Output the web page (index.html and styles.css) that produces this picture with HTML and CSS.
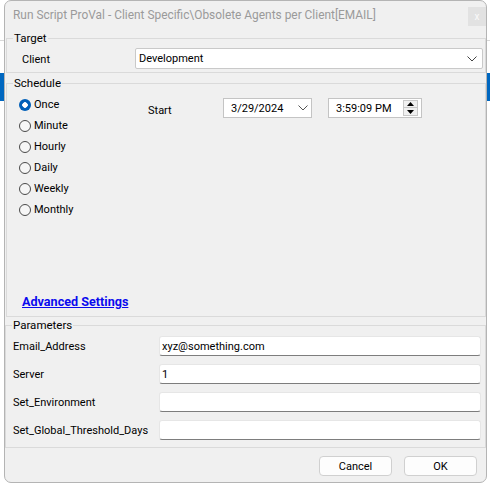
FILE: index.html
```html
<!DOCTYPE html>
<html>
<head>
<meta charset="utf-8">
<link rel="stylesheet" href="styles.css">
</head>
<body>
<div class="desktop">
  <div class="side side-left"><div class="bg-line"></div><div class="bg-blue"></div></div>
  <div class="window">
    <div class="titlebar">
      <span class="title">Run Script ProVal - Client Specific\Obsolete Agents per Client[EMAIL]</span>
      <div class="close">x</div>
    </div>

    <fieldset class="group target">
      <legend>Target</legend>
      <div class="client-row">
        <span class="lbl">Client</span>
        <div class="combo">
          <span>Development</span>
          <svg class="chev" width="10" height="6" viewBox="0 0 10 6"><path d="M0.5 0.5 L5 5 L9.5 0.5" fill="none" stroke="#444" stroke-width="1"/></svg>
        </div>
      </div>
    </fieldset>

    <fieldset class="group schedule">
      <legend>Schedule</legend>
      <div class="sched-inner">
        <div class="sched-body">
          <div class="radios">
            <div class="radio-row"><span class="radio checked"></span><span>Once</span></div>
            <div class="radio-row"><span class="radio"></span><span>Minute</span></div>
            <div class="radio-row"><span class="radio"></span><span>Hourly</span></div>
            <div class="radio-row"><span class="radio"></span><span>Daily</span></div>
            <div class="radio-row"><span class="radio"></span><span>Weekly</span></div>
            <div class="radio-row"><span class="radio"></span><span>Monthly</span></div>
          </div>
          <div class="start">
            <span class="start-lbl">Start</span>
            <div class="date">
              <span>3/29/2024</span>
              <svg class="chev" width="10" height="6" viewBox="0 0 10 6"><path d="M0.5 0.5 L5 5 L9.5 0.5" fill="none" stroke="#555" stroke-width="1"/></svg>
            </div>
            <div class="time">
              <span>3:59:09 PM</span>
              <div class="spin">
                <div class="spin-btn"><svg width="7" height="4" viewBox="0 0 7 4"><path d="M3.5 0 L7 4 L0 4 Z" fill="#000"/></svg></div>
                <div class="spin-btn"><svg width="7" height="4" viewBox="0 0 7 4"><path d="M0 0 L7 0 L3.5 4 Z" fill="#000"/></svg></div>
              </div>
            </div>
          </div>
        </div>
        <a class="adv" href="#">Advanced Settings</a>
      </div>
    </fieldset>

    <fieldset class="group params">
      <legend>Parameters</legend>
      <div class="param-grid">
        <span class="plbl">Email_Address</span><div class="tbox">xyz@something.com</div>
        <span class="plbl">Server</span><div class="tbox">1</div>
        <span class="plbl">Set_Environment</span><div class="tbox"></div>
        <span class="plbl">Set_Global_Threshold_Days</span><div class="tbox"></div>
      </div>
    </fieldset>

    <div class="buttons">
      <div class="btn">Cancel</div>
      <div class="btn">OK</div>
    </div>
  </div>
  <div class="side side-right"><div class="bg-line"></div><div class="bg-blue"></div></div>
</div>
</body>
</html>
```
FILE: styles.css
```css
* { box-sizing: border-box; }
html, body { margin: 0; padding: 0; }
body {
  width: 490px;
  height: 484px;
  background: #ffffff;
  font-family: Roboto, "Liberation Sans", sans-serif;
  font-size: 11px;
  color: #000;
  overflow: hidden;
}
.desktop {
  display: flex;
  height: 484px;
}
.side {
  width: 4px;
  flex: none;
  display: flex;
  flex-direction: column;
}
.side-right { width: 3px; }
.bg-line {
  margin-top: 40px;
  height: 1px;
  background: #d8d8d8;
}
.bg-blue {
  margin-top: 32px;
  height: 28px;
  background: #0067c0;
}
.window {
  width: 483px;
  height: 483px;
  flex: none;
  background: #f0f0f0;
  border: 1px solid #b4b4b4;
  border-radius: 7px;
  display: flex;
  flex-direction: column;
}
.titlebar {
  height: 29px;
  display: flex;
  align-items: center;
  justify-content: space-between;
  padding-left: 8px;
}
.title {
  font-size: 11.9px;
  color: #9a9a9a;
  margin-top: -1px;
}
.close {
  width: 18px;
  height: 19px;
  background: #e2e2e2;
  color: #fafafa;
  font-size: 10px;
  display: flex;
  align-items: center;
  justify-content: center;
  margin-top: 2px;
}
fieldset.group {
  margin: 0;
  padding: 0;
  border: 1px solid #dadada;
  min-width: 0;
}
fieldset.group legend {
  padding: 0 1px;
  line-height: 16px;
  font-size: 11.5px;
}
.target {
  margin-left: 1px !important;
  padding: 2px 2px 3px 15px !important;
}
.target legend { margin-left: -9px; }
.client-row {
  display: grid;
  grid-template-columns: 113px 1fr;
  align-items: center;
}
.lbl { padding-top: 1px; }
.combo {
  height: 21px;
  background: #fff;
  border: 1px solid #c9c9c9;
  border-radius: 2px;
  display: flex;
  align-items: center;
  justify-content: space-between;
  padding: 0 5px 0 3px;
}
.schedule {
  margin-top: 2px !important;
  margin-left: 1px !important;
  padding: 3px 0 6px 12px !important;
}
.schedule legend { margin-left: -6px; }
.sched-inner {
  height: 216px;
  display: flex;
  flex-direction: column;
}
.sched-body {
  display: flex;
}
.radios {
  width: 129px;
  display: flex;
  flex-direction: column;
}
.radio-row {
  height: 21px;
  display: flex;
  align-items: center;
  gap: 3px;
}
.radio {
  width: 12px;
  height: 12px;
  border-radius: 50%;
  border: 1px solid #4a4a4a;
  background: #f6f6f6;
}
.radio.checked {
  border: none;
  background: radial-gradient(circle, #ffffff 0 2.5px, #005fb8 3px);
}
.start {
  display: flex;
  align-items: flex-start;
  margin-top: 4px;
}
.start-lbl {
  width: 75px;
  padding-top: 6px;
}
.date, .time {
  height: 20px;
  background: #fff;
  border: 1px solid #c4c4c4;
  display: flex;
  align-items: center;
}
.date {
  width: 89px;
  padding: 0 3px 0 7px;
  justify-content: space-between;
}
.time {
  width: 94px;
  margin-left: 16px;
  padding: 0 3px 0 7px;
  justify-content: space-between;
}
.spin {
  display: flex;
  flex-direction: column;
  width: 15px;
}
.spin-btn {
  height: 8px;
  border: 1px solid #c8c8c8;
  background: #f0f0f0;
  display: flex;
  align-items: center;
  justify-content: center;
}
.spin-btn + .spin-btn { border-top: none; height: 8px; }
.adv {
  margin-top: auto;
  margin-left: 3px;
  font-weight: bold;
  color: #0a0aee;
  text-decoration: underline;
  line-height: 16px;
  font-size: 12.6px;
  align-self: flex-start;
}
.params {
  padding: 3px 4px 7px 7px !important;
}
.params legend { margin-left: -1px; }
.param-grid {
  display: grid;
  grid-template-columns: 146px 1fr;
  row-gap: 8px;
  align-items: center;
}
.tbox {
  height: 20px;
  background: #fff;
  border: 1px solid #e6e6e6;
  border-bottom: 1px solid #7d7d7d;
  border-radius: 3px;
  padding: 0 2px;
  display: flex;
  align-items: center;
}
.buttons {
  display: flex;
  justify-content: flex-end;
  gap: 12px;
  padding: 8px 9px 0 0;
}
.btn {
  width: 73px;
  height: 20px;
  background: #fdfdfd;
  border: 1px solid #d0d0d0;
  border-radius: 4px;
  display: flex;
  align-items: center;
  justify-content: center;
}
```
